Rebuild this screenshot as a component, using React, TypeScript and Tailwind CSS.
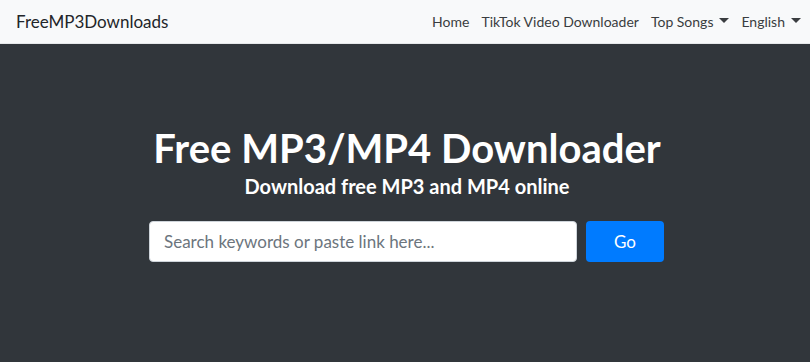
import { useState } from 'react';

const NAV_LINKS = [
  { label: 'Home' },
  { label: 'TikTok Video Downloader' },
  { label: 'Top Songs', dropdown: true },
  { label: 'English', dropdown: true },
];

export default function App() {
  const [query, setQuery] = useState('');

  return (
    <div className="min-h-screen flex flex-col bg-[#31363b]" style={{ fontFamily: 'Lato, "Open Sans", sans-serif' }}>
      {/* NAVBAR */}
      <nav className="h-[44px] bg-[#f8f9fa] flex items-center justify-between pl-4 pr-[9px] border-b border-[#e6e8ea]">
        <a className="text-[17px] text-[#222529] leading-none">FreeMP3Downloads</a>
        <ul className="flex items-center gap-[12px] text-[14px] text-[#3a3d40]">
          {NAV_LINKS.map((link) => (
            <li key={link.label} className="flex items-center gap-[6px]">
              <span>{link.label}</span>
              {link.dropdown && <Caret />}
            </li>
          ))}
        </ul>
      </nav>

      {/* HERO */}
      <section className="flex-1 flex flex-col items-center pt-[80px] pl-[4px] text-white">
        <h1 className="text-[40px] font-bold leading-[48px]">Free MP3/MP4 Downloader</h1>
        <h2 className="text-[20px] font-bold leading-[26px] mt-[1px]">Download free MP3 and MP4 online</h2>

        <form className="flex items-center gap-[9px] mt-[22px] ml-[-1px]" onSubmit={(e) => e.preventDefault()}>
          <input
            value={query}
            onChange={(e) => setQuery(e.target.value)}
            placeholder="Search keywords or paste link here..."
            className="w-[428px] h-[41px] bg-white rounded-[4px] px-[14px] text-[17px] text-[#495057] placeholder:text-[#6c757d] outline-none border border-[#ced4da]"
          />
          <button className="w-[78px] h-[41px] bg-[#007bff] rounded-[4px] text-[17px] text-white">Go</button>
        </form>
      </section>
    </div>
  );
}

function Caret() {
  return (
    <svg width="10" height="6" viewBox="0 0 10 6" className="mt-[-2px]">
      <path d="M0 0h10L5 5z" fill="#3a3d40" />
    </svg>
  );
}
